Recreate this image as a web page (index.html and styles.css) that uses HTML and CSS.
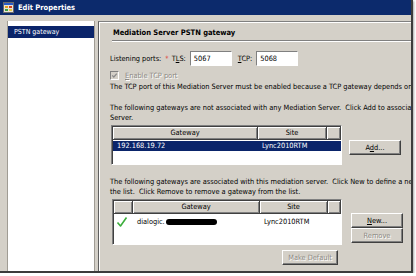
FILE: index.html
```html
<!DOCTYPE html>
<html lang="en">
<head>
  <meta charset="UTF-8">
  <title>Edit Properties</title>
  <link rel="stylesheet" href="styles.css">
</head>
<body>
  <div class="shot">
    <div class="dialog">
      <div class="titlebar">
        <svg class="title-icon" width="11" height="11" viewBox="0 0 11 11">
          <rect x="0.5" y="0.5" width="10" height="10" fill="#e8e4d8" stroke="#6b6b6b"/>
          <rect x="1" y="1" width="9" height="2" fill="#2a5cc8"/>
          <rect x="2" y="4" width="3" height="2" fill="#e8a020"/>
          <rect x="6" y="4" width="3" height="2" fill="#d04020"/>
          <rect x="2" y="7" width="3" height="2" fill="#40a040"/>
          <rect x="6" y="7" width="3" height="2" fill="#e8c840"/>
        </svg>
        <span>Edit Properties</span>
      </div>

      <div class="content">
        <div class="tree">
          <div class="tree-item">PSTN gateway</div>
        </div>

        <div class="panel">
          <div class="panel-head">Mediation Server PSTN gateway</div>
          <div class="rule"></div>

          <div class="ports">
            <span>Listening ports:</span>
            <span class="req">*</span>
            <span>T<u>L</u>S:</span>
            <div class="field">5067</div>
            <span class="tcp-label"><u>T</u>CP:</span>
            <div class="field">5068</div>
          </div>

          <div class="check-row">
            <span class="checkbox">
              <svg width="7" height="7" viewBox="0 0 7 7"><path d="M1.2 3.4 L2.8 5 L5.8 1.6" fill="none" stroke="#8a8a8a" stroke-width="1.2"/></svg>
            </span>
            <span class="disabled"><u>E</u>nable TCP port</span>
          </div>

          <p class="line note">The TCP port of this Mediation Server must be enabled because a TCP gateway depends on it.</p>

          <p class="line para1">The following gateways are not associated with any Mediation Server.&nbsp; Click Add to associate a gateway with this Mediation<br>Server.</p>

          <div class="list-row">
            <div class="listview lv-free">
              <div class="lv-head">
                <div class="lv-col">Gateway</div>
                <div class="lv-col">Site</div>
                <div class="lv-col"></div>
              </div>
              <div class="lv-item selected">
                <div class="cell">192.168.19.72</div>
                <div class="cell">Lync2010RTM</div>
                <div class="cell"></div>
              </div>
            </div>
            <div class="side-buttons add-buttons">
              <div class="btn">A<u>d</u>d...</div>
            </div>
          </div>

          <p class="line para2">The following gateways are associated with this mediation server.&nbsp; Click New to define a new gateway and add it to<br>the list.&nbsp; Click Remove to remove a gateway from the list.</p>

          <div class="list-row">
            <div class="listview lv-used">
              <div class="lv-head">
                <div class="lv-col"></div>
                <div class="lv-col">Gateway</div>
                <div class="lv-col">Site</div>
                <div class="lv-col"></div>
              </div>
              <div class="lv-item">
                <div class="cell">
                  <svg width="12" height="12" viewBox="0 0 12 12"><path d="M1.5 6.5 L4.5 10 L10.5 1.5" fill="none" stroke="#3cae3c" stroke-width="1.6" stroke-linejoin="round"/></svg>
                </div>
                <div class="cell">dialogic.<span class="redact"></span></div>
                <div class="cell">Lync2010RTM</div>
                <div class="cell"></div>
              </div>
            </div>
            <div class="side-buttons used-buttons">
              <div class="btn"><u>N</u>ew...</div>
              <div class="btn off">Remove</div>
            </div>
          </div>

          <div class="default-row">
            <div class="btn off wide">Make Default</div>
          </div>
        </div>
      </div>
    </div>
  </div>
</body>
</html>
```

FILE: styles.css
```css
/* Classic dialog, shown as a cropped thumbnail */
body {
  margin: 0;
  background-color: #fff;
  font-family: "DejaVu Sans Condensed", "DejaVu Sans", sans-serif;
  font-size: 7.35px;
  color: #000;
}

.shot {
  width: 411px;
  height: 271px;
  overflow: hidden;
  background-color: #d4d0c8;
  border-right: 2px solid #3c3c3c;
  border-bottom: 2px solid #3c3c3c;
  box-shadow: 1px 1px 2px rgba(0, 0, 0, 0.35);
}

.dialog {
  width: 560px;
}

.titlebar {
  height: 15px;
  display: flex;
  align-items: center;
  gap: 4px;
  padding-left: 3px;
  background-color: #0c2a6c;
  color: #fff;
  font-weight: bold;
  font-size: 7.5px;
}

.title-icon {
  display: block;
}

.content {
  display: flex;
  align-items: flex-start;
  gap: 3px;
  padding: 6px 0 0 7px;
}

/* left tree */
.tree {
  width: 86px;
  height: 260px;
  background-color: #fff;
  border-left: 1px solid #a09c94;
  border-right: 1px solid #a09c94;
  padding-top: 5px;
}

.tree-item {
  height: 12px;
  line-height: 12px;
  padding-left: 6px;
  background-color: #0a246a;
  color: #fff;
  font-size: 7px;
}

/* right page */
.panel {
  flex: 1;
  height: 260px;
  border-top: 1px solid #808080;
  border-left: 1px solid #606060;
  box-shadow: inset 1px 1px #fff;
  padding-left: 11px;
}

.panel-head {
  height: 10px;
  line-height: 10px;
  margin: 6px 0 0 3px;
  font-weight: bold;
  font-size: 7.5px;
}

.rule {
  margin: 2px 0 0 2px;
  border-top: 1px solid #808080;
  border-bottom: 1px solid #fff;
}

.ports {
  display: flex;
  align-items: center;
  height: 15px;
  margin-top: 9px;
}

.req {
  color: #e03030;
  margin: 0 3px 0 4px;
}

.field {
  width: 37px;
  height: 13px;
  line-height: 13px;
  margin-left: 4px;
  padding-left: 3px;
  background-color: #fff;
  border: 1px solid;
  border-color: #808080 #fff #fff #808080;
}

.tcp-label {
  margin-left: 6px;
}

.check-row {
  display: flex;
  align-items: center;
  gap: 6px;
  height: 8px;
  margin-top: 5px;
}

.checkbox {
  width: 7px;
  height: 7px;
  background-color: #d4d0c8;
  border: 1px solid;
  border-color: #808080 #fff #fff #808080;
  display: flex;
}

.disabled {
  color: #8c8a84;
  text-shadow: 1px 1px #fff;
}

.line {
  margin: 0;
  line-height: 10px;
  white-space: nowrap;
}

.note {
  margin-top: 3px;
}

.para1 {
  margin-top: 11px;
}

.para2 {
  margin-top: 12px;
}

/* list views */
.list-row {
  display: flex;
  align-items: flex-start;
}

.listview {
  width: 228px;
  background-color: #fff;
  border: 1px solid;
  border-color: #808080 #fff #fff #808080;
  box-shadow: inset 1px 1px #404040;
  padding: 1px 0 0 1px;
}

.lv-free {
  height: 37px;
  margin: 2px 0 0 1px;
}

.lv-used {
  width: 227px;
  height: 43px;
  margin: 2px 0 0 2px;
}

.lv-head,
.lv-item {
  display: grid;
}

.lv-free .lv-head,
.lv-free .lv-item {
  grid-template-columns: 145px 69px 1fr;
}

.lv-used .lv-head,
.lv-used .lv-item {
  grid-template-columns: 19px 127px 68px 1fr;
}

.lv-col {
  height: 12px;
  line-height: 12px;
  text-align: center;
  background-color: #d4d0c8;
  border-right: 1px solid #404040;
  border-bottom: 1px solid #404040;
  box-shadow: inset 1px 1px #fff, inset -1px -1px #808080;
}

.lv-item {
  height: 10px;
  line-height: 10px;
  margin-top: 1px;
}

.lv-used .lv-item {
  height: 13px;
  line-height: 13px;
}

.lv-item.selected {
  background-color: #0a246a;
  color: #fff;
}

.cell {
  padding-left: 4px;
  white-space: nowrap;
}

.lv-used .cell:first-child {
  padding-left: 2px;
  display: flex;
  align-items: center;
}

.redact {
  display: inline-block;
  width: 51px;
  height: 6px;
  margin-left: 1px;
  vertical-align: -1px;
  background-color: #000;
  border-radius: 3px;
}

/* buttons */
.side-buttons {
  display: flex;
  flex-direction: column;
  margin-left: 7px;
}

.add-buttons {
  margin-top: 17px;
}

.used-buttons {
  margin-top: 16px;
  margin-left: 9px;
}

.btn {
  width: 50px;
  height: 13px;
  line-height: 13px;
  text-align: center;
  background-color: #d4d0c8;
  border: 1px solid;
  border-color: #fff #404040 #404040 #fff;
  box-shadow: inset -1px -1px #808080;
}

.btn.off {
  color: #8c8a84;
  text-shadow: 1px 1px #fff;
}

.default-row {
  display: flex;
  width: 231px;
  justify-content: flex-end;
  margin-top: 5px;
}

.btn.wide {
  width: 54px;
  margin-right: 3px;
}
```
